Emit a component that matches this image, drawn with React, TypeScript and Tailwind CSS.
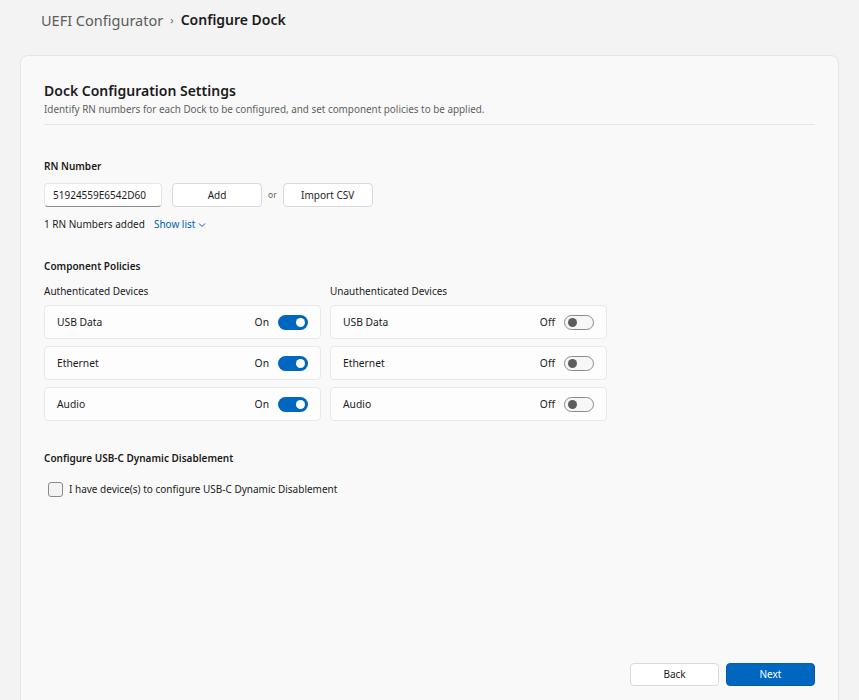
import React from "react";

const font = { fontFamily: '"Segoe UI", "Noto Sans", "Open Sans", sans-serif' };

function Toggle({ on }: { on: boolean }) {
  return on ? (
    <div className="flex h-[15px] w-[30px] items-center justify-end rounded-full bg-[#0067c0] pr-[3px]">
      <div className="h-[9px] w-[9px] rounded-full bg-white" />
    </div>
  ) : (
    <div className="flex h-[15px] w-[30px] items-center rounded-full border border-[#8a8a8a] bg-[#f7f7f7] pl-[3px]">
      <div className="h-[9px] w-[9px] rounded-full bg-[#5d5d5d]" />
    </div>
  );
}

function Row({ label, on }: { label: string; on: boolean }) {
  return (
    <div className="flex h-[34px] items-center rounded-[4px] border border-[#e8e8e8] bg-[#fdfdfd] pl-[12px] pr-[12px]">
      <span className="flex-1 pt-[2px] text-[10.3px] text-[#1b1b1b]">{label}</span>
      <span className="mr-[9px] pt-[2px] text-[10.3px] text-[#1b1b1b]">{on ? "On" : "Off"}</span>
      <Toggle on={on} />
    </div>
  );
}

export default function App() {
  const items = ["USB Data", "Ethernet", "Audio"];
  return (
    <div className="h-[700px] w-[859px] overflow-hidden bg-[#f3f3f3]" style={font}>
      <div className="flex h-[55px] items-start pl-[41px] pt-[9px]">
        <span className="text-[14.5px] leading-[22px] text-[#5c5c5c]">UEFI Configurator</span>
        <span className="mx-[7px] mt-[1px] text-[11px] leading-[20px] text-[#6a6a6a]">›</span>
        <span className="text-[14px] font-semibold leading-[22px] text-[#1b1b1b]">Configure Dock</span>
      </div>
      <div className="mx-[20px] flex h-[660px] flex-col rounded-[8px] border border-[#e5e5e5] bg-[#f9f9f9] px-[23px] pt-[24px]">
        <div className="text-[14px] font-semibold leading-[22px] text-[#1b1b1b]">Dock Configuration Settings</div>
        <div className="text-[9.9px] leading-[14px] text-[#5f5f5f]">
          Identify RN numbers for each Dock to be configured, and set component policies to be applied.
        </div>
        <div className="mt-[8px] h-px bg-[#e5e5e5]" />

        <div className="mt-[34px] text-[10px] font-semibold text-[#1b1b1b]">RN Number</div>
        <div className="mt-[9px] flex items-center">
          <div className="flex h-[24px] w-[118px] items-center rounded-[4px] border border-[#e5e5e5] border-b-[#8a8a8a] bg-white pl-[8px] text-[10px] text-[#1b1b1b]">
            51924559E6542D60
          </div>
          <button className="ml-[10px] h-[24px] w-[90px] rounded-[4px] border border-[#d9d9d9] bg-white text-[10px] text-[#1b1b1b]">
            Add
          </button>
          <span className="mx-[6px] text-[8.5px] text-[#5f5f5f]">or</span>
          <button className="h-[24px] w-[90px] rounded-[4px] border border-[#d9d9d9] bg-white text-[10px] text-[#1b1b1b]">
            Import CSV
          </button>
        </div>
        <div className="mt-[10px] flex items-center text-[10px]">
          <span className="text-[#1b1b1b]">1 RN Numbers added</span>
          <span className="ml-[9px] text-[#005fb8]">Show list</span>
          <svg className="ml-[3px]" width="8" height="8" viewBox="0 0 8 8">
            <path d="M1 2.5 L4 5.5 L7 2.5" fill="none" stroke="#005fb8" strokeWidth="1" />
          </svg>
        </div>

        <div className="mt-[27px] text-[10px] font-semibold text-[#1b1b1b]">Component Policies</div>
        <div className="mt-[10px] grid w-[563px] grid-cols-2 gap-x-[9px]">
          <div className="flex flex-col">
            <div className="mb-[6px] text-[10px] text-[#1b1b1b]">Authenticated Devices</div>
            <div className="flex flex-col gap-[7px]">
              {items.map((i) => (
                <Row key={i} label={i} on={true} />
              ))}
            </div>
          </div>
          <div className="flex flex-col">
            <div className="mb-[6px] text-[10px] text-[#1b1b1b]">Unauthenticated Devices</div>
            <div className="flex flex-col gap-[7px]">
              {items.map((i) => (
                <Row key={i} label={i} on={false} />
              ))}
            </div>
          </div>
        </div>

        <div className="mt-[30px] text-[10px] font-semibold text-[#1b1b1b]">
          Configure USB-C Dynamic Disablement
        </div>
        <div className="mt-[16px] flex items-center pl-[4px]">
          <div className="h-[15px] w-[15px] rounded-[3px] border border-[#8a8a8a] bg-[#f3f3f3]" />
          <span className="ml-[6px] text-[10px] text-[#1b1b1b]">I have device(s) to configure USB-C Dynamic Disablement</span>
        </div>

        <div className="mt-[166px] flex justify-end gap-[7px]">
          <button className="h-[23px] w-[89px] rounded-[4px] border border-[#d9d9d9] bg-white text-[10px] text-[#1b1b1b]">
            Back
          </button>
          <button className="h-[23px] w-[89px] rounded-[4px] border border-[#0a5cab] bg-[#0067c0] text-[10px] text-white">
            Next
          </button>
        </div>
      </div>
    </div>
  );
}
